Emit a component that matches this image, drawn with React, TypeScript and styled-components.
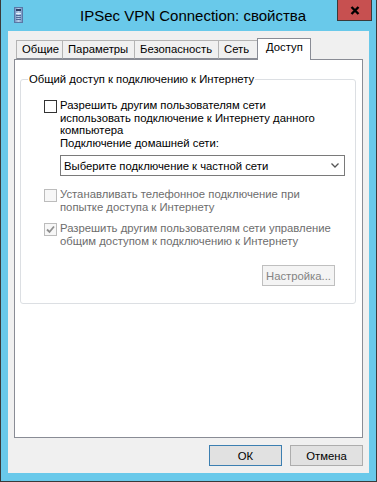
import React from 'react';
import styled, { createGlobalStyle } from 'styled-components';

const GlobalStyle = createGlobalStyle`
  html, body {
    margin: 0;
    padding: 0;
    background: #69c9ea;
  }
  * {
    box-sizing: border-box;
  }
`;

const UI_FONT = `'Liberation Sans', Arial, sans-serif`;

const Window = styled.div`
  width: 377px;
  height: 482px;
  display: flex;
  flex-direction: column;
  background: #69c9ea;
  border: 1px solid #3a3a3a;
  border-top: none;
  font-family: ${UI_FONT};
  font-size: 11.3px;
  color: #000;
`;

const TitleBar = styled.div`
  height: 31px;
  display: grid;
  grid-template-columns: 1fr auto 1fr;
  align-items: start;
  padding: 0 4px 0 13px;
`;

const AppIcon = styled.svg`
  margin-top: 7px;
  justify-self: start;
`;

const Title = styled.div`
  font-size: 15px;
  line-height: 31px;
  color: #000;
  white-space: nowrap;
`;

const CloseButton = styled.button`
  justify-self: end;
  width: 35px;
  height: 21px;
  padding: 0;
  background: #c75050;
  border: 1px solid #3a3a3a;
  border-top: none;
  display: flex;
  align-items: center;
  justify-content: center;
`;

const Client = styled.div`
  flex: 1;
  margin: 0 7px 8px;
  background: #f0f0f0;
  display: flex;
  flex-direction: column;
  padding: 7px 6px 7px;
`;

const TabStrip = styled.div`
  height: 21px;
  display: flex;
  align-items: flex-end;
  padding-left: 2px;
  position: relative;
  z-index: 1;
`;

const Tab = styled.div<{ $w: number; $active?: boolean }>`
  width: ${({ $w }) => $w}px;
  height: ${({ $active }) => ($active ? 22 : 19)}px;
  margin-bottom: ${({ $active }) => ($active ? -1 : 0)}px;
  margin-right: -1px;
  background: ${({ $active }) => ($active ? '#fff' : '#f0f0f0')};
  border: 1px solid ${({ $active }) => ($active ? '#898c95' : '#b4b4b4')};
  border-bottom: ${({ $active }) => ($active ? 'none' : '1px solid #898c95')};
  padding-left: ${({ $active }) => ($active ? 8 : 5)}px;
  line-height: 17px;
  white-space: nowrap;
`;

const Panel = styled.div`
  flex: 1;
  background: #fff;
  border: 1px solid #898c95;
  padding: 0 6px 0 5px;
`;

const GroupBox = styled.fieldset`
  margin: 12px 0 0;
  padding: 13px 10px 17px 7px;
  border: 1px solid #dcdfe3;
  border-radius: 3px;
  min-width: 0;
`;

const GroupLegend = styled.legend`
  padding: 0 1px;
  line-height: 14px;
`;

const GroupBody = styled.div`
  padding-left: 16px;
  display: flex;
  flex-direction: column;
`;

const CheckRow = styled.div<{ $gapTop?: number }>`
  display: flex;
  align-items: flex-start;
  gap: 3px;
  margin-top: ${({ $gapTop }) => $gapTop ?? 0}px;
`;

const Box = styled.span<{ $disabled?: boolean }>`
  flex: none;
  width: 13px;
  height: 13px;
  margin-top: 1px;
  border: 1px solid ${({ $disabled }) => ($disabled ? '#bcbcbc' : '#333')};
  background: ${({ $disabled }) => ($disabled ? '#f7f7f7' : '#fff')};
  display: flex;
  align-items: center;
  justify-content: center;
`;

const CheckText = styled.div<{ $disabled?: boolean }>`
  line-height: 12.5px;
  white-space: nowrap;
  color: ${({ $disabled }) => ($disabled ? '#6d6d6d' : '#000')};
`;

const Indented = styled.div`
  padding-left: 16px;
`;

const FieldLabel = styled.div`
  line-height: 12.5px;
`;

const Select = styled.div`
  margin-top: 6px;
  width: 285px;
  height: 21px;
  border: 1px solid #7a7a7a;
  background: #fff;
  display: flex;
  align-items: center;
  justify-content: space-between;
  padding: 0 5px 0 3px;
  white-space: nowrap;
`;

const ButtonRow = styled.div<{ $top?: number }>`
  display: flex;
  justify-content: flex-end;
  gap: 8px;
  margin-top: ${({ $top }) => $top ?? 0}px;
`;

const PushButton = styled.button<{ $default?: boolean; $disabled?: boolean }>`
  width: 73px;
  height: 21px;
  padding: 0;
  font-family: ${UI_FONT};
  font-size: 11.3px;
  color: ${({ $disabled }) => ($disabled ? '#838383' : '#000')};
  background: ${({ $disabled }) => ($disabled ? '#f4f4f4' : '#e1e1e1')};
  border: 1px solid
    ${({ $default, $disabled }) => ($default ? '#3c7fb1' : $disabled ? '#bfbfbf' : '#adadad')};
`;

const SettingsRow = styled(ButtonRow)`
  margin-right: 10px;
`;

const Footer = styled(ButtonRow)`
  margin-top: 7px;
`;

const Check = ({ color }: { color: string }) => (
  <svg width="9" height="9" viewBox="0 0 9 9">
    <path d="M1 4.5 L3.5 7 L8 1.5" fill="none" stroke={color} strokeWidth="1.8" />
  </svg>
);

export default function App() {
  return (
    <>
      <GlobalStyle />
      <Window>
        <TitleBar>
          <AppIcon width="9" height="16" viewBox="0 0 9 16">
            <defs>
              <linearGradient id="tower" x1="0" x2="1" y1="0" y2="0">
                <stop offset="0" stopColor="#6d8fbf" />
                <stop offset="0.5" stopColor="#b9cfe8" />
                <stop offset="1" stopColor="#6d8fbf" />
              </linearGradient>
            </defs>
            <rect x="0.5" y="0.5" width="8" height="15" fill="url(#tower)" stroke="#5a78a6" />
            <rect x="2" y="2" width="5" height="2" fill="#2e3f66" />
            <rect x="2" y="6" width="5" height="1" fill="#e8f0fa" />
            <rect x="2" y="8" width="5" height="1" fill="#4f6a99" />
            <rect x="2" y="10" width="5" height="1" fill="#4f6a99" />
            <rect x="2" y="12" width="5" height="1" fill="#4f6a99" />
          </AppIcon>
          <Title>IPSec VPN Connection: свойства</Title>
          <CloseButton aria-label="Закрыть">
            <svg width="10" height="9" viewBox="0 0 10 9">
              <path d="M1.5 1 L8.5 8 M8.5 1 L1.5 8" stroke="#000" strokeWidth="2.4" />
            </svg>
          </CloseButton>
        </TitleBar>

        <Client>
          <TabStrip>
            <Tab $w={47}>Общие</Tab>
            <Tab $w={73}>Параметры</Tab>
            <Tab $w={85}>Безопасность</Tab>
            <Tab $w={40}>Сеть</Tab>
            <Tab $w={54} $active>Доступ</Tab>
          </TabStrip>

          <Panel>
            <GroupBox>
              <GroupLegend>Общий доступ к подключению к Интернету</GroupLegend>
              <GroupBody>
                <CheckRow>
                  <Box />
                  <CheckText>
                    Разрешить другим пользователям сети
                    <br />
                    использовать подключение к Интернету данного
                    <br />
                    компьютера
                  </CheckText>
                </CheckRow>
                <Indented>
                  <FieldLabel>Подключение домашней сети:</FieldLabel>
                  <Select>
                    <span>Выберите подключение к частной сети</span>
                    <svg width="8" height="5" viewBox="0 0 8 5">
                      <path d="M0.5 0.5 L4 4 L7.5 0.5" fill="none" stroke="#555" strokeWidth="1.3" />
                    </svg>
                  </Select>
                </Indented>
                <CheckRow $gapTop={12}>
                  <Box $disabled />
                  <CheckText $disabled>
                    Устанавливать телефонное подключение при
                    <br />
                    попытке доступа к Интернету
                  </CheckText>
                </CheckRow>
                <CheckRow $gapTop={9}>
                  <Box $disabled>
                    <Check color="#8f8f8f" />
                  </Box>
                  <CheckText $disabled>
                    Разрешить другим пользователям сети управление
                    <br />
                    общим доступом к подключению к Интернету
                  </CheckText>
                </CheckRow>
              </GroupBody>
              <SettingsRow $top={18}>
                <PushButton $disabled>Настройка...</PushButton>
              </SettingsRow>
            </GroupBox>
          </Panel>

          <Footer>
            <PushButton $default>ОК</PushButton>
            <PushButton>Отмена</PushButton>
          </Footer>
        </Client>
      </Window>
    </>
  );
}
